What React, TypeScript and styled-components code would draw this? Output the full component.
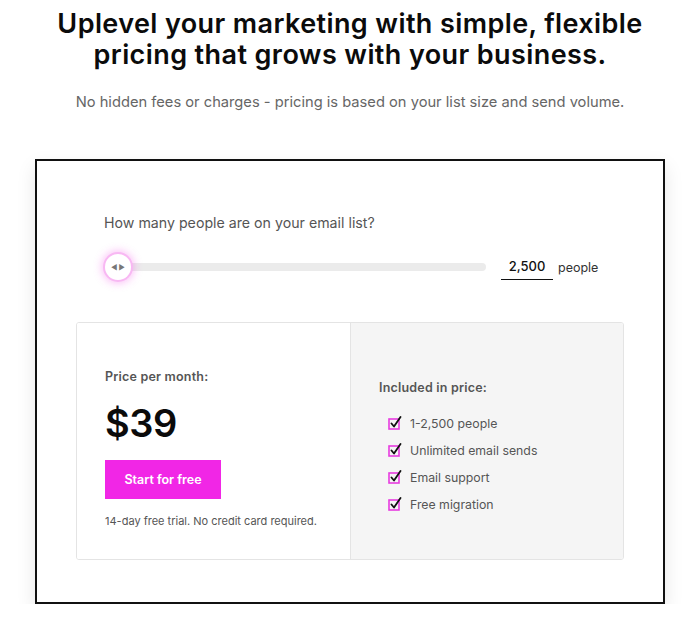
import React from 'react'
import styled, { createGlobalStyle } from 'styled-components'

const GlobalStyle = createGlobalStyle`
  body {
    margin: 0;
    background: #fff;
    font-family: Inter, "Noto Sans", sans-serif;
    color: #111;
  }
`

const Page = styled.div`
  width: 700px;
  padding-top: 8px;
`

const Heading = styled.h1`
  margin: 0 auto;
  width: 640px;
  text-align: center;
  font-size: 27px;
  line-height: 31px;
  font-weight: 600;
  letter-spacing: 0.4px;
  color: #0b0b0b;
`

const Sub = styled.p`
  margin: 23px 0 0;
  text-align: center;
  font-size: 14.7px;
  color: #666;
`

const Card = styled.section`
  margin: 48px 0 0 35px;
  width: 630px;
  height: 445px;
  border: 2px solid #111;
  box-shadow: 0 8px 18px rgba(0, 0, 0, 0.1);
  padding: 53px 39px 0;
  box-sizing: border-box;
`

const Question = styled.div`
  padding-left: 28px;
  font-size: 14.2px;
  color: #555;
`

const SliderRow = styled.div`
  display: flex;
  align-items: center;
  margin-top: 23px;
  padding-left: 28px;
`

const Track = styled.div`
  position: relative;
  width: 368px;
  height: 8px;
  border-radius: 4px;
  background: #ebebeb;
  margin-left: 14px;
`

const Thumb = styled.div`
  position: absolute;
  left: -13px;
  top: 50%;
  transform: translateY(-50%);
  width: 26px;
  height: 26px;
  border-radius: 50%;
  background: #fff;
  box-shadow: 0 0 0 2px #f8b8f3, 0 0 8px 3px rgba(240, 60, 230, 0.35);
  display: flex;
  align-items: center;
  justify-content: center;
  gap: 1px;
  font-size: 7px;
  color: #777;
`

const CountInput = styled.div`
  margin-left: 15px;
  width: 52px;
  padding: 4px 0 5px;
  border-bottom: 1.5px solid #111;
  text-align: center;
  font-size: 13px;
  font-weight: 500;
  color: #111;
`

const Unit = styled.span`
  margin-left: 5px;
  font-size: 12.5px;
  color: #333;
`

const Plans = styled.div`
  display: grid;
  grid-template-columns: 274px 1fr;
  margin-top: 42px;
  height: 236px;
  border: 1px solid #e4e4e4;
  border-radius: 3px;
  overflow: hidden;
`

const PricePane = styled.div`
  background: #fff;
  border-right: 1px solid #e4e4e4;
  padding: 46px 28px 0;
`

const FeaturePane = styled.div`
  background: #f5f5f5;
  padding: 57px 28px 0;
`

const SmallTitle = styled.div`
  font-size: 12.5px;
  font-weight: 600;
  color: #555;
  letter-spacing: 0.2px;
`

const Price = styled.div`
  margin-top: 16px;
  font-size: 38px;
  font-weight: 600;
  letter-spacing: -0.5px;
  color: #0b0b0b;
  line-height: 46px;
`

const StartButton = styled.button`
  margin-top: 14px;
  width: 116px;
  height: 39px;
  border: 0;
  background: #f126e6;
  color: #fff;
  font-family: inherit;
  font-size: 12.5px;
  font-weight: 600;
  cursor: pointer;
`

const Note = styled.div`
  margin-top: 15px;
  font-size: 11px;
  color: #555;
`

const Features = styled.ul`
  list-style: none;
  margin: 19px 0 0;
  padding: 0 0 0 9px;
  display: flex;
  flex-direction: column;
  gap: 9px;
`

const Feature = styled.li`
  display: flex;
  align-items: center;
  gap: 8px;
  height: 18px;
  font-size: 12.3px;
  color: #555;
`

const CheckIcon = () => (
  <svg width="14" height="14" viewBox="0 0 14 14" fill="none">
    <rect x="1" y="3" width="10" height="10" stroke="#e83ce0" strokeWidth="1.6" />
    <path d="M3.5 7.5 L6 10.5 L12.5 1" stroke="#111" strokeWidth="1.8" strokeLinecap="round" strokeLinejoin="round" />
  </svg>
)

const features = ['1-2,500 people', 'Unlimited email sends', 'Email support', 'Free migration']

export default function App() {
  return (
    <Page>
      <GlobalStyle />
      <Heading>Uplevel your marketing with simple, flexible pricing that grows with your business.</Heading>
      <Sub>No hidden fees or charges - pricing is based on your list size and send volume.</Sub>
      <Card>
        <Question>How many people are on your email list?</Question>
        <SliderRow>
          <Track>
            <Thumb>
              <span>◀</span>
              <span>▶</span>
            </Thumb>
          </Track>
          <CountInput>2,500</CountInput>
          <Unit>people</Unit>
        </SliderRow>
        <Plans>
          <PricePane>
            <SmallTitle>Price per month:</SmallTitle>
            <Price>$39</Price>
            <StartButton>Start for free</StartButton>
            <Note>14-day free trial. No credit card required.</Note>
          </PricePane>
          <FeaturePane>
            <SmallTitle>Included in price:</SmallTitle>
            <Features>
              {features.map((f) => (
                <Feature key={f}>
                  <CheckIcon />
                  {f}
                </Feature>
              ))}
            </Features>
          </FeaturePane>
        </Plans>
      </Card>
    </Page>
  )
}
